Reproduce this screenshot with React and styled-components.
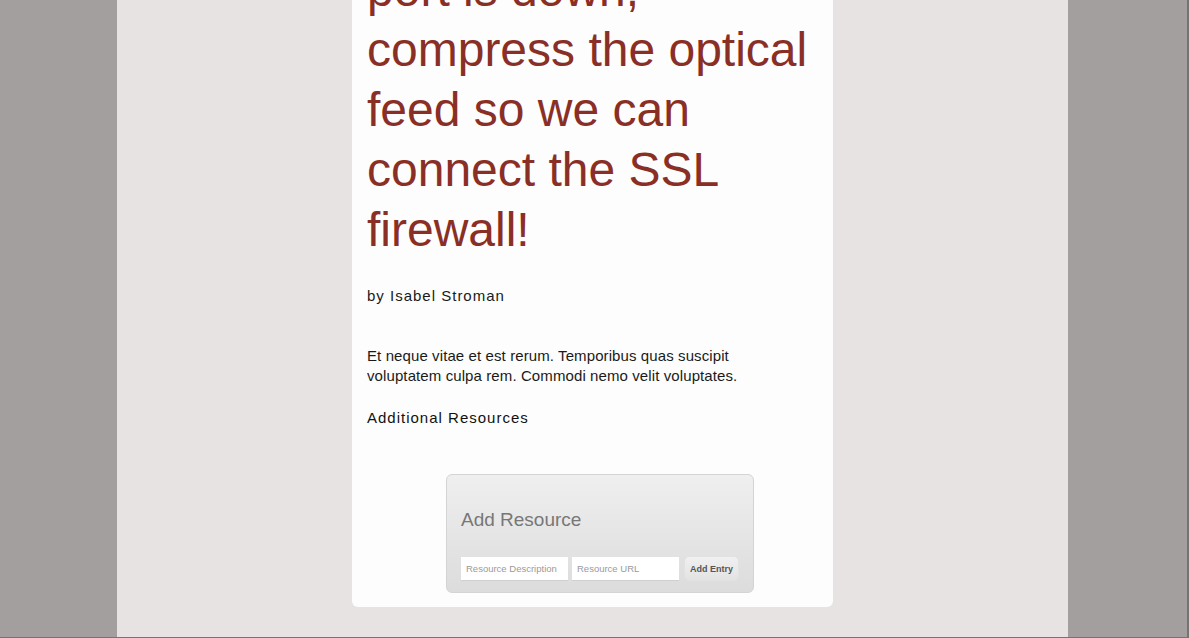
import styled, { createGlobalStyle } from 'styled-components'

/*--- Global ---*/
const GlobalStyle = createGlobalStyle`
    html, body {
        margin: 0;
        height: 100%;
        overflow: hidden;
        background: #a39f9e;
        font-family: "Liberation Sans", Arial, sans-serif;
    }
`

const Page = styled.main`
    height: 100vh;
    box-sizing: border-box;
    padding-right: 2px;
    border-right: 2px solid #767372;
    border-bottom: 1px solid #767372;
    display: flex;
    justify-content: center;
    overflow: hidden;
`

const Column = styled.section`
    width: 951px;
    height: 100%;
    background: #e7e3e2;
    display: flex;
    flex-direction: column;
    justify-content: flex-end;
    align-items: center;
    padding-bottom: 30px;
    box-sizing: border-box;
    overflow: hidden;
`

/*--- Article ---*/
const Card = styled.article`
    flex-shrink: 0;
    width: 481px;
    box-sizing: border-box;
    padding: 40px 15px 14px;
    background: #fdfdfd;
    border-radius: 6px;
`

const Title = styled.h1`
    margin: 0 0 26px;
    font-size: 48px;
    line-height: 60px;
    font-weight: normal;
    color: #8a2f26;
`

const Byline = styled.p`
    margin: 0 0 40px;
    font-size: 15px;
    line-height: 20px;
    letter-spacing: 1px;
    color: #1a1a1a;
`

const Body = styled.p`
    margin: 0 0 22px;
    max-width: 420px;
    font-size: 15px;
    line-height: 20px;
    letter-spacing: 0.1px;
    color: #1a1a1a;
`

const SectionTitle = styled.h3`
    margin: 0;
    font-size: 15px;
    line-height: 20px;
    font-weight: normal;
    letter-spacing: 1px;
    color: #111;
`

/*--- Resource form ---*/
const ResourceBox = styled.form`
    width: 308px;
    box-sizing: border-box;
    margin: 46px 0 0 79px;
    padding: 33px 14px 11px;
    border: 1px solid #d4d4d4;
    border-radius: 6px;
    background: linear-gradient(#efefef, #dcdcdc);
`

const BoxTitle = styled.h2`
    margin: 0 0 24px;
    font-size: 19px;
    line-height: 24px;
    font-weight: normal;
    color: #777;
`

const Row = styled.div`
    display: flex;
    align-items: center;
    gap: 4px;
`

const Field = styled.input`
    width: 107px;
    height: 24px;
    box-sizing: border-box;
    padding: 0 5px;
    border: none;
    border-bottom: 1px solid #cfcfcf;
    background: #fff;
    font-family: inherit;
    font-size: 9.5px;
    color: #555;

    &::placeholder {
        color: #9a9a9a;
    }
`

const AddButton = styled.button`
    width: 56px;
    height: 25px;
    margin-left: 1px;
    padding: 0;
    border: 1px solid #e2e2e2;
    border-radius: 5px;
    background: linear-gradient(#f0f0f0, #e3e3e3);
    font-family: inherit;
    font-size: 9px;
    font-weight: bold;
    color: #555;
    cursor: pointer;
`

export default function App() {
    return (
        <>
            <GlobalStyle />
            <Page>
                <Column>
                    <Card>
                        <Title>
                            If the primary SMTP port is down, compress the optical feed so we can connect the SSL firewall!
                        </Title>
                        <Byline>by Isabel Stroman</Byline>
                        <Body>
                            Et neque vitae et est rerum. Temporibus quas suscipit voluptatem culpa rem. Commodi nemo velit voluptates.
                        </Body>
                        <SectionTitle>Additional Resources</SectionTitle>
                        <ResourceBox onSubmit={e => e.preventDefault()}>
                            <BoxTitle>Add Resource</BoxTitle>
                            <Row>
                                <Field placeholder="Resource Description" />
                                <Field placeholder="Resource URL" />
                                <AddButton type="submit">Add Entry</AddButton>
                            </Row>
                        </ResourceBox>
                    </Card>
                </Column>
            </Page>
        </>
    )
}
